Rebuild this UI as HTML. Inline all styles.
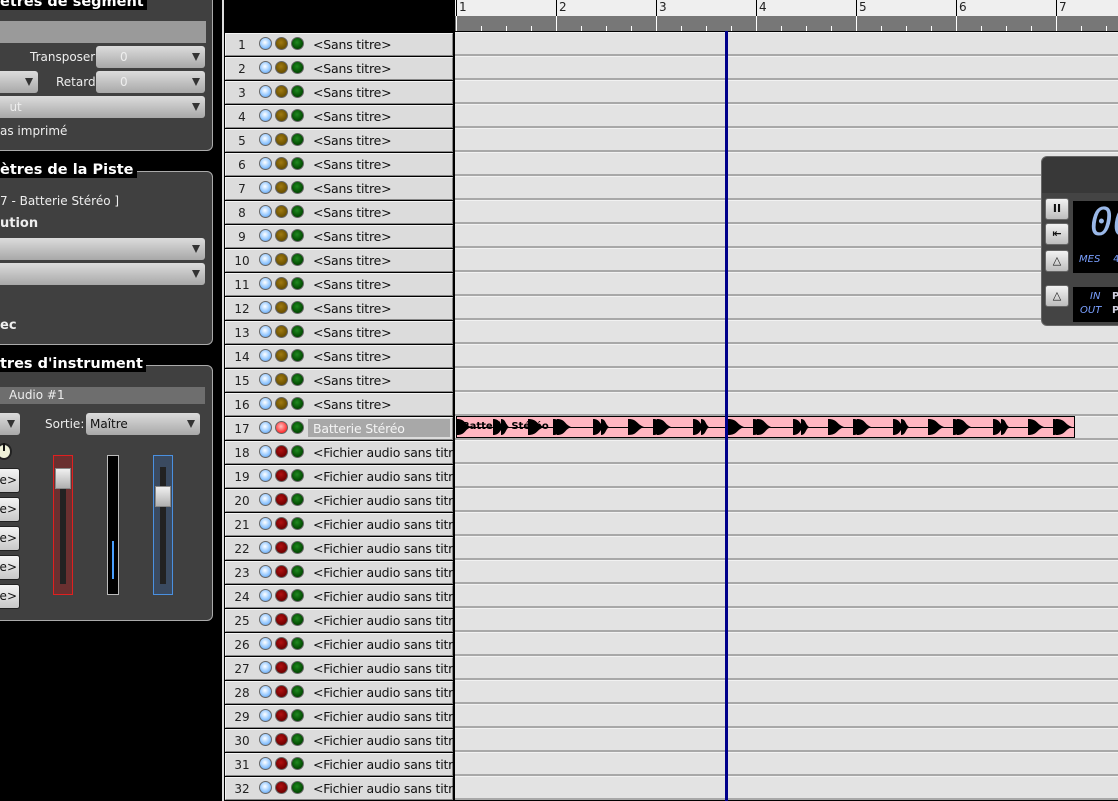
<!DOCTYPE html>
<html><head><meta charset="utf-8"><style>
*{box-sizing:border-box;margin:0;padding:0}
body{width:1118px;height:801px;overflow:hidden;background:#000;font-family:"DejaVu Sans","Liberation Sans",sans-serif;font-size:12px;position:relative}
.a{position:absolute}
.pn{position:absolute;left:-10px;width:223px;background:#404040;border:1px solid #aaa;border-radius:6px}
.tt{position:absolute;color:#fff;font-weight:bold;font-size:14.5px;background:#000;padding-right:3px;line-height:16px}
.cb{position:absolute;height:22px;border-radius:3px;background:linear-gradient(#dcdcdc,#a8a8a8);color:#eee;font-size:12px;line-height:22px;padding-left:8px}
.cb:after{content:"";position:absolute;right:5px;top:7px;border-left:4px solid transparent;border-right:4px solid transparent;border-top:8px solid #333}
.lab{position:absolute;color:#eee;font-size:12px}
.btn{position:absolute;left:-10px;width:30px;height:25px;border:1px solid #222;border-radius:3px;background:linear-gradient(#f4f4f4,#c8c8c8);font-size:12px;line-height:23px;text-align:right;padding-right:2px;color:#111}
.row{position:absolute;left:225px;width:228px;height:23px;background:#dcdcdc;border:1px solid #f4f4f4;border-right-color:#888;border-bottom-color:#888}
.num{position:absolute;left:0;width:32px;text-align:center;top:4px;font-size:12px;color:#222}
.led{position:absolute;top:3px;width:13px;height:13px;border-radius:50%;border:1px solid #666}
.nm{position:absolute;left:87px;top:3px;font-size:12.5px;color:#111;white-space:nowrap;overflow:hidden;width:140px;letter-spacing:-0.2px}
.lane{position:absolute;left:455px;width:663px;height:24px;background:#e3e3e3;border-bottom:2px solid #a8a8a8;border-top:1px solid #f2f2f2}
.tb{position:absolute;left:1045px;width:24px;height:22px;border-radius:3px;background:linear-gradient(#f2f2f2,#bdbdbd);border:1px solid #666;text-align:center;font-size:11px;line-height:20px;color:#111;font-weight:bold}
</style></head><body>
<div class="pn" style="top:-20px;height:171px"></div>
<div class="tt" style="left:0;top:-6px">ètres de segment</div>
<div class="a" style="left:0;top:21px;width:206px;height:22px;background:#9a9a9a"></div>
<div class="lab" style="left:30px;top:50px">Transposer</div>
<div class="cb" style="left:96px;top:46px;width:109px;padding-left:24px">0</div>
<div class="cb" style="left:-10px;top:71px;width:48px"></div>
<div class="lab" style="left:56px;top:75px">Retard</div>
<div class="cb" style="left:96px;top:71px;width:109px;padding-left:24px">0</div>
<div class="cb" style="left:-10px;top:96px;width:215px">&nbsp;&nbsp;&nbsp;ut</div>
<div class="lab" style="left:0;top:124px">as imprimé</div>

<div class="pn" style="top:171px;height:174px"></div>
<div class="tt" style="left:0;top:162px">ètres de la Piste</div>
<div class="lab" style="left:0;top:194px">7 - Batterie Stéréo ]</div>
<div class="lab" style="left:0;top:216px;font-weight:bold;font-size:13px">ution</div>
<div class="cb" style="left:-10px;top:238px;width:215px"></div>
<div class="cb" style="left:-10px;top:263px;width:215px"></div>
<div class="lab" style="left:0;top:318px;font-weight:bold;font-size:13px">ec</div>

<div class="pn" style="top:365px;height:256px"></div>
<div class="tt" style="left:0;top:356px">tres d'instrument</div>
<div class="a" style="left:0;top:387px;width:205px;height:17px;background:#6e6e6e;color:#eee;font-size:12px;line-height:17px;padding-left:9px">Audio #1</div>
<div class="cb" style="left:-10px;top:413px;width:30px"></div>
<div class="lab" style="left:45px;top:417px">Sortie:</div>
<div class="cb" style="left:86px;top:413px;width:114px;color:#111;padding-left:4px">Maître</div>
<div class="a" style="left:-4px;top:443px;width:16px;height:17px;border-radius:50%;background:#eef0d8;border:2px solid #222"></div>
<div class="a" style="left:3px;top:443px;width:2px;height:8px;background:#111"></div>
<div class="btn" style="top:468px">ne&gt;</div>
<div class="btn" style="top:497px">ne&gt;</div>
<div class="btn" style="top:526px">ne&gt;</div>
<div class="btn" style="top:555px">ne&gt;</div>
<div class="btn" style="top:584px">ne&gt;</div>
<div class="a" style="left:53px;top:455px;width:20px;height:140px;background:#6a3030;border:1px solid #e02020"></div>
<div class="a" style="left:60px;top:468px;width:6px;height:116px;background:#222"></div>
<div class="a" style="left:55px;top:468px;width:16px;height:21px;background:linear-gradient(#f0f0f0,#b0b0b0);border:1px solid #888"></div>
<div class="a" style="left:107px;top:455px;width:12px;height:140px;background:#000;border:1px solid #bbb"></div>
<div class="a" style="left:112px;top:541px;width:2px;height:38px;background:#4aa0ff"></div>
<div class="a" style="left:153px;top:455px;width:20px;height:140px;background:#3a4a60;border:1px solid #4a90e0"></div>
<div class="a" style="left:160px;top:467px;width:6px;height:117px;background:#222"></div>
<div class="a" style="left:155px;top:486px;width:16px;height:21px;background:linear-gradient(#f0f0f0,#b0b0b0);border:1px solid #888"></div>

<div class="a" style="left:222px;top:0;width:2px;height:801px;background:#ddd"></div>
<div class="a" style="left:455px;top:0;width:663px;height:16px;background:#efefef"></div>
<div class="a" style="left:455px;top:16px;width:663px;height:15px;background:#777"></div>
<div id="rul"></div>
<div id="rows"></div>
<div class="a" style="left:456px;top:416px;width:619px;height:22px;background:#ffb6c1;border:1px solid #000"></div>
<div class="a" style="left:457px;top:427px;width:617px;height:1px;background:#000"></div>
<svg class="a" style="left:456px;top:416px" width="620" height="22" id="wv"></svg>
<div class="a" style="left:462px;top:421px;font-size:10px;font-weight:bold;color:#000">Batterie Stéréo</div>
<div class="a" style="left:725px;top:31px;width:3px;height:770px;background:#00008a"></div>
<div class="a" style="left:1041px;top:156px;width:90px;height:170px;background:#444;border:1px solid #666;border-radius:6px"></div>
<div class="a" style="left:1042px;top:157px;width:90px;height:36px;background:#383838;border-radius:6px 0 0 0"></div>
<div class="a" style="left:1073px;top:201px;width:60px;height:72px;background:#000"></div>
<div class="a" style="left:1090px;top:200px;font-size:38px;font-style:italic;color:#9ab8e8;font-family:'DejaVu Sans Mono',monospace">00</div>
<div class="a" style="left:1079px;top:254px;font-size:10px;font-style:italic;color:#7aa0ff">MES</div>
<div class="a" style="left:1113px;top:254px;font-size:10px;color:#7aa0ff">4</div>
<div class="a" style="left:1073px;top:287px;width:60px;height:35px;background:#000"></div>
<div class="a" style="left:1090px;top:291px;font-size:10px;font-style:italic;color:#7aa0ff">IN</div>
<div class="a" style="left:1080px;top:305px;font-size:10px;font-style:italic;color:#7aa0ff">OUT</div>
<div class="a" style="left:1112px;top:291px;font-size:10px;font-weight:bold;color:#ccd">P</div>
<div class="a" style="left:1112px;top:305px;font-size:10px;font-weight:bold;color:#ccd">P</div>
<div class="tb" style="top:198px">II</div>
<div class="tb" style="top:223px">⇤</div>
<div class="tb" style="top:250px">△</div>
<div class="tb" style="top:285px">△</div>
<script>
var r='';
for(var b=0;b<7;b++){var x=455+b*100;
r+='<div class="a" style="left:'+(x+1)+'px;top:0;width:1px;height:31px;background:#000"></div>';
r+='<div class="a" style="left:'+(x+4)+'px;top:0;font-size:12px;color:#222">'+(b+1)+'</div>';
r+='<div class="a" style="left:'+(x+1)+'px;top:16px;width:1px;height:15px;background:#fff"></div>';
for(var k=1;k<4;k++)r+='<div class="a" style="left:'+(x+1+k*25)+'px;top:26px;width:1px;height:5px;background:#fff"></div>';}
document.getElementById('rul').innerHTML=r;
var h='';
for(var i=1;i<=32;i++){var y=32+(i-1)*24;
h+='<div class="lane" style="top:'+y+'px"></div>';
var c1=i<17?'#a07a10':(i==17?'#ffc0c0':'#b01010'),mid=i<17?'#6a5000':(i==17?'#ff3030':'#700000');
var nm=i<17?'&lt;Sans titre&gt;':(i==17?'Batterie Stéréo':'&lt;Fichier audio sans titre&gt;');
h+='<div class="row" style="top:'+(y+1)+'px"><div class="num">'+i+'</div>'+
'<div class="led" style="left:33px;background:radial-gradient(circle at 45% 40%,#fff,#8cc4ff 60%,#5080c0)"></div>'+
'<div class="led" style="left:49px;background:radial-gradient(circle at 45% 40%,'+c1+','+mid+' 70%)"></div>'+
'<div class="led" style="left:65px;background:radial-gradient(circle at 45% 40%,#208a20,#004800 70%)"></div>'+
(i==17?'<div class="a" style="left:82px;top:1px;width:142px;height:18px;background:#a8a8a8"></div><div class="nm" style="color:#f4f4f4">'+nm+'</div>':'<div class="nm">'+nm+'</div>')+'</div>';}
document.getElementById('rows').innerHTML=h;
var w='';
function blob(x,l){return '<path d="M'+x+' 3 C'+(x+l*0.6)+' 3 '+(x+l*0.5)+' 8 '+(x+l)+' 11 C'+(x+l*0.5)+' 14 '+(x+l*0.6)+' 19 '+x+' 19z" fill="#000"/>';}
for(var b=0;b<6;b++){var x=b*100;
[[1,14],[37,12],[45,8],[72,16],[97,14]].forEach(function(p){if(x+p[0]<615)w+=blob(x+p[0],p[1]);});}
w+=blob(600,16);
document.getElementById('wv').innerHTML=w;
</script>
</body></html>
